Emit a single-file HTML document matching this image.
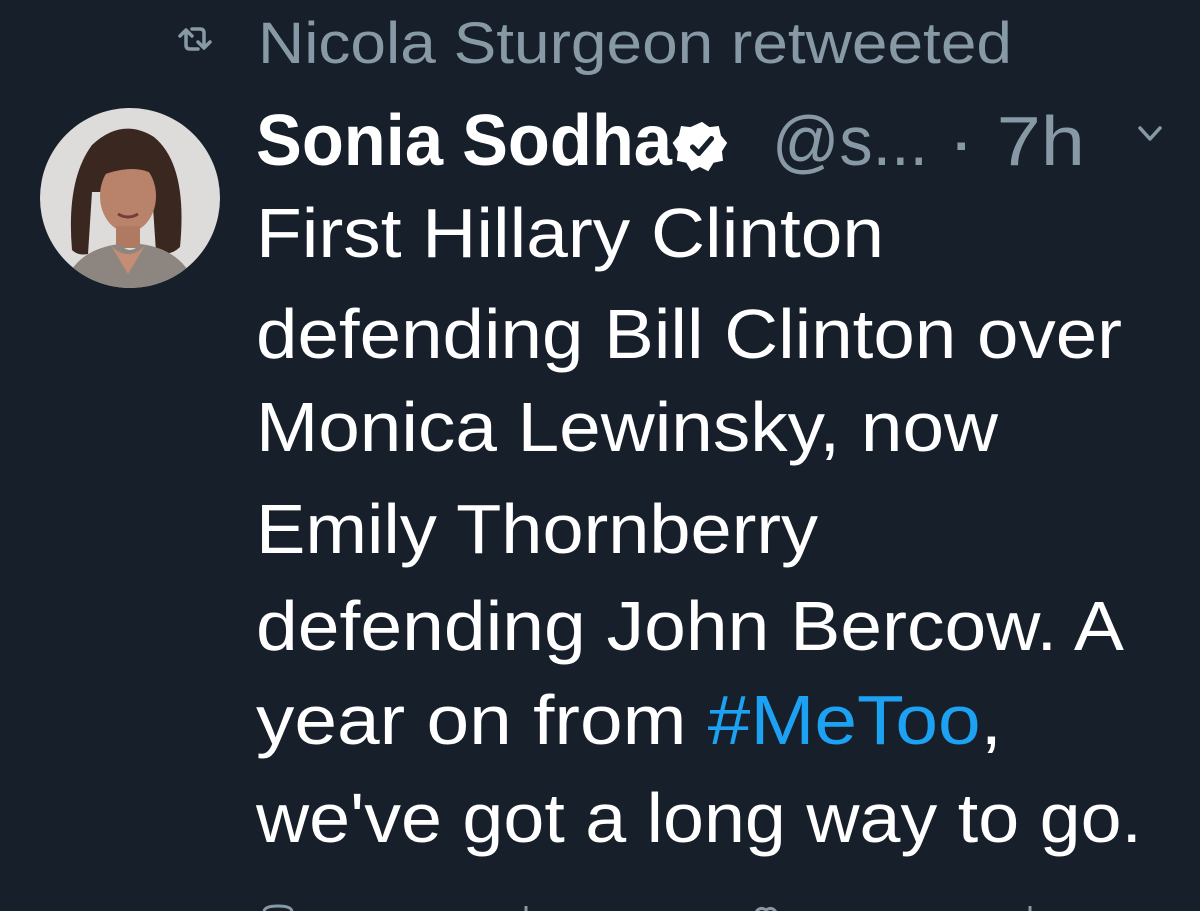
<!DOCTYPE html>
<html><head><meta charset="utf-8"><style>
html,body{margin:0;padding:0;background:#161f2a;width:1200px;height:911px;overflow:hidden}
</style></head><body>
<svg width="1200" height="911" viewBox="0 0 1200 911" xmlns="http://www.w3.org/2000/svg">
<rect width="1200" height="911" fill="#161f2a"/>
<g fill="none" stroke="#8899a6" stroke-width="3.5" stroke-linecap="round" stroke-linejoin="round">
<path d="M180 36 l6 -6 l6 6 M186 31 v14 q0 4 4 4 h8"/>
<path d="M210 42 l-6 6 l-6 -6 M204 47 v-14 q0 -4 -4 -4 h-8"/>
</g>
<g font-family="Liberation Sans, sans-serif">
<text x="258" y="63" font-size="58" fill="#8899a6" textLength="754" lengthAdjust="spacingAndGlyphs">Nicola Sturgeon retweeted</text>
<text x="256" y="165" font-size="72" font-weight="bold" fill="#ffffff" textLength="416" lengthAdjust="spacingAndGlyphs">Sonia Sodha</text>
<text x="772" y="165" font-size="70" fill="#8899a6" textLength="156" lengthAdjust="spacingAndGlyphs">@s...</text>
<text x="948" y="165" font-size="70" fill="#8899a6" textLength="137" lengthAdjust="spacingAndGlyphs">· 7h</text>
<g font-size="70" fill="#ffffff">
<text x="256" y="257" textLength="628" lengthAdjust="spacingAndGlyphs">First Hillary Clinton</text>
<text x="256" y="358" textLength="866" lengthAdjust="spacingAndGlyphs">defending Bill Clinton over</text>
<text x="256" y="451" textLength="742" lengthAdjust="spacingAndGlyphs">Monica Lewinsky, now</text>
<text x="256" y="553" textLength="562" lengthAdjust="spacingAndGlyphs">Emily Thornberry</text>
<text x="256" y="650" textLength="868" lengthAdjust="spacingAndGlyphs">defending John Bercow. A</text>
<text x="256" y="744" textLength="746" lengthAdjust="spacingAndGlyphs">year on from <tspan fill="#1da1f2">#MeToo</tspan>,</text>
<text x="256" y="842" textLength="886" lengthAdjust="spacingAndGlyphs">we've got a long way to go.</text>
</g>
</g>
<g transform="translate(702,146) scale(1.05)">
<path fill="#ffffff" d="M0 -23 l7 5 l9 -1 l2 9 l6 7 l-5 8 l1 9 l-9 2 l-5 8 l-8 -4 l-8 4 l-5 -8 l-9 -2 l1 -9 l-5 -8 l6 -7 l2 -9 l9 1 z"/>
<path fill="none" stroke="#161f2a" stroke-width="5" stroke-linecap="round" stroke-linejoin="round" d="M-9 1 l6 6 l12 -14"/>
</g>
<path d="M1140 128 l10 11 l10 -11" fill="none" stroke="#8899a6" stroke-width="3.5" stroke-linecap="round" stroke-linejoin="round"/>
<defs><clipPath id="c"><circle cx="130" cy="198" r="90"/></clipPath></defs>
<g clip-path="url(#c)">
<rect x="40" y="108" width="180" height="180" fill="#dedcdb"/>
<path d="M72 250 q-6 -70 20 -105 q30 -28 62 -8 q34 28 26 110 q-10 10 -24 5 l-4 -60 l-60 0 l-4 62 q-10 2 -16 -4z" fill="#3a2720"/>
<ellipse cx="128" cy="196" rx="28" ry="36" fill="#b9836b"/>
<path d="M100 176 q10 -30 44 -24 q10 10 12 24 q-20 -14 -56 0z" fill="#3a2720"/>
<rect x="116" y="226" width="24" height="22" fill="#b07a62"/>
<path d="M60 300 q8 -50 60 -56 q10 12 20 0 q50 6 60 56z" fill="#8c8580"/>
<path d="M110 244 l18 30 l18 -30 q-8 10 -18 10 q-10 0 -18 -10z" fill="#c48d74"/>
<path d="M118 214 q10 6 20 0" stroke="#7a3a3a" stroke-width="3" fill="none"/>
</g>
<g fill="none" stroke="#8899a6" stroke-width="3">
<path d="M264 912 q0 -6 14 -6 q14 0 14 6"/>
<path d="M526 912 v-6"/>
<path d="M756 912 q4 -6 10 -2 q6 -4 10 2"/>
<path d="M1030 912 v-6"/>
</g>
</svg>
</body></html>
